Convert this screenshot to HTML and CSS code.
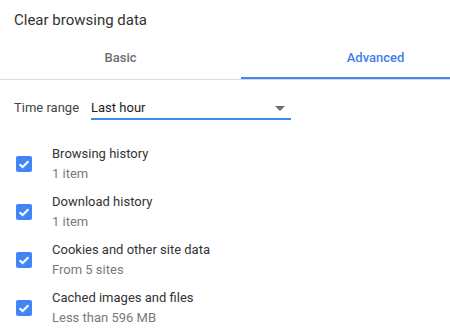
FILE: index.html
```html
<!DOCTYPE html>
<html lang="en">
<head>
    <meta charset="UTF-8">
    <title>Clear browsing data</title>
    <link rel="stylesheet" href="styles.css">
</head>
<body>
    <div class="dialog">
        <div class="title">Clear browsing data</div>
        <div class="tabs">
            <div class="tab">Basic</div>
            <div class="tab active">Advanced</div>
        </div>
        <div class="range">
            <span class="range-label">Time range</span>
            <div class="select">
                <span>Last hour</span>
                <svg class="arrow" width="10" height="5" viewBox="0 0 10 5"><polygon points="0,0 10,0 5,5" fill="#6f6f6f"/></svg>
            </div>
        </div>
        <div class="items">
            <div class="item">
                <span class="box"><svg width="16" height="16" viewBox="0 0 16 16"><path d="M3.6 8.2 L6.6 11 L12.4 5.2" fill="none" stroke="#fff" stroke-width="2"/></svg></span>
                <div class="text">
                    <div class="name">Browsing history</div>
                    <div class="sub">1 item</div>
                </div>
            </div>
            <div class="item">
                <span class="box"><svg width="16" height="16" viewBox="0 0 16 16"><path d="M3.6 8.2 L6.6 11 L12.4 5.2" fill="none" stroke="#fff" stroke-width="2"/></svg></span>
                <div class="text">
                    <div class="name">Download history</div>
                    <div class="sub">1 item</div>
                </div>
            </div>
            <div class="item">
                <span class="box"><svg width="16" height="16" viewBox="0 0 16 16"><path d="M3.6 8.2 L6.6 11 L12.4 5.2" fill="none" stroke="#fff" stroke-width="2"/></svg></span>
                <div class="text">
                    <div class="name">Cookies and other site data</div>
                    <div class="sub">From 5 sites</div>
                </div>
            </div>
            <div class="item">
                <span class="box"><svg width="16" height="16" viewBox="0 0 16 16"><path d="M3.6 8.2 L6.6 11 L12.4 5.2" fill="none" stroke="#fff" stroke-width="2"/></svg></span>
                <div class="text">
                    <div class="name">Cached images and files</div>
                    <div class="sub">Less than 596 MB</div>
                </div>
            </div>
        </div>
    </div>
</body>
</html>
```

FILE: styles.css
```css
body {
    margin: 0;
    background: #fff;
    font-family: Roboto, "Noto Sans", sans-serif;
    color: #333;
    overflow: hidden;
}
.dialog {
    width: 450px;
    height: 334px;
    overflow: hidden;
}
.title {
    padding: 10px 14px 2px;
    font-size: 15px;
    line-height: 20px;
    color: #333;
}
.tabs {
    display: flex;
    width: 510px;
    border-bottom: 1px solid #dcdcdc;
}
.tab {
    width: 241px;
    padding: 16px 0 9px;
    border-bottom: 2px solid transparent;
    text-align: center;
    font-size: 13px;
    font-weight: 500;
    line-height: 20px;
    color: #6e6e6e;
}
.tab.active {
    width: 269px;
    color: #3f7ee8;
    border-bottom-color: #4285f4;
}
.range {
    display: flex;
    align-items: flex-end;
    gap: 12px;
    padding: 18px 14px 0;
    font-size: 13px;
    line-height: 20px;
}
.range-label {
    color: #444;
    padding-bottom: 2px;
}
.select {
    display: flex;
    align-items: center;
    justify-content: space-between;
    width: 200px;
    border-bottom: 2px solid #4285f4;
    color: #222;
}
.arrow {
    margin-right: 6px;
}
.items {
    padding-top: 20px;
}
.item {
    display: flex;
    align-items: center;
    gap: 20px;
    padding: 4px 16px;
    font-size: 13px;
    line-height: 20px;
}
.box {
    display: block;
    width: 16px;
    height: 16px;
    border-radius: 2px;
    background: #4285f4;
}
.box svg {
    display: block;
}
.name {
    color: #333;
}
.sub {
    color: #7a7a7a;
}
```
